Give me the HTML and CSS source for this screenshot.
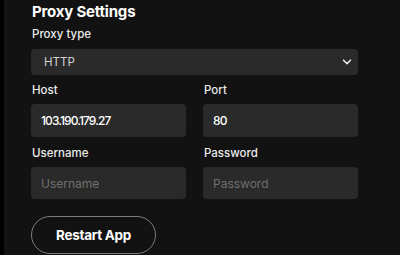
FILE: index.html
```html
<!DOCTYPE html>
<html>
<head>
    <meta charset="UTF-8">
    <title>Proxy Settings</title>
    <link rel="stylesheet" href="styles.css">
</head>
<body>
    <div class="page">
        <h2 class="title">Proxy Settings</h2>
        <div class="field">
            <label class="label">Proxy type</label>
            <div class="select">
                <span>HTTP</span>
                <svg class="chevron" width="10" height="6" viewBox="0 0 10 6">
                    <path d="M1.5 1.2 L5 4.6 L8.5 1.2" fill="none" stroke="#e6e6e6" stroke-width="1.6" stroke-linecap="round" stroke-linejoin="round"/>
                </svg>
            </div>
        </div>
        <div class="row">
            <div class="field">
                <label class="label">Host</label>
                <input class="input" type="text" value="103.190.179.27">
            </div>
            <div class="field">
                <label class="label">Port</label>
                <input class="input" type="text" value="80">
            </div>
        </div>
        <div class="row">
            <div class="field">
                <label class="label">Username</label>
                <input class="input short" type="text" placeholder="Username">
            </div>
            <div class="field">
                <label class="label">Password</label>
                <input class="input short" type="password" placeholder="Password">
            </div>
        </div>
        <button class="restart" type="button">Restart App</button>
    </div>
</body>
</html>
```

FILE: styles.css
```css
html, body {
    margin: 0;
    height: 100%;
    background-color: #121212;
}
.page {
    box-sizing: border-box;
    height: 100%;
    border-left: 4px solid #000000;
    padding: 2px 0 0 27px;
    width: 358px;
    font-family: Inter, "Noto Sans", sans-serif;
    color: #ffffff;
}
.title {
    font-size: 15px;
    font-weight: 700;
    line-height: 20px;
    margin: 0 0 4px 1px;
    letter-spacing: -0.2px;
}
.field {
    display: flex;
    flex-direction: column;
    gap: 7px;
}
.label {
    font-size: 11.5px;
    font-weight: 500;
    line-height: 16px;
    color: #ececec;
    margin-left: 1px;
}
.select {
    box-sizing: border-box;
    height: 26px;
    background-color: #2a2a2a;
    border-radius: 4px;
    display: flex;
    align-items: center;
    justify-content: space-between;
    padding: 0 6px 0 13px;
    font-size: 11.5px;
    color: #d2d2d2;
    margin-bottom: 7px;
}
.row {
    display: grid;
    grid-template-columns: 155px 155px;
    gap: 17px;
    margin-bottom: 8px;
}
.row .field {
    gap: 6px;
}
.input {
    box-sizing: border-box;
    width: 155px;
    height: 33px;
    background-color: #2a2a2a;
    border: none;
    border-radius: 4px;
    padding: 0 10px;
    font-family: Inter, "Noto Sans", sans-serif;
    font-size: 12px;
    font-weight: 500;
    font-variant-numeric: proportional-nums;
    letter-spacing: -0.9px;
    color: #ffffff;
    outline: none;
}
.input.short {
    height: 32px;
}
.input::placeholder {
    color: #6f6f6f;
    font-weight: 400;
    letter-spacing: 0;
}
.restart {
    margin-top: 9px;
    width: 125px;
    height: 38px;
    background-color: transparent;
    border: 1px solid #7c7c7c;
    border-radius: 19px;
    color: #ffffff;
    font-family: Inter, "Noto Sans", sans-serif;
    font-size: 13.5px;
    font-weight: 700;
    letter-spacing: -0.3px;
}
```
